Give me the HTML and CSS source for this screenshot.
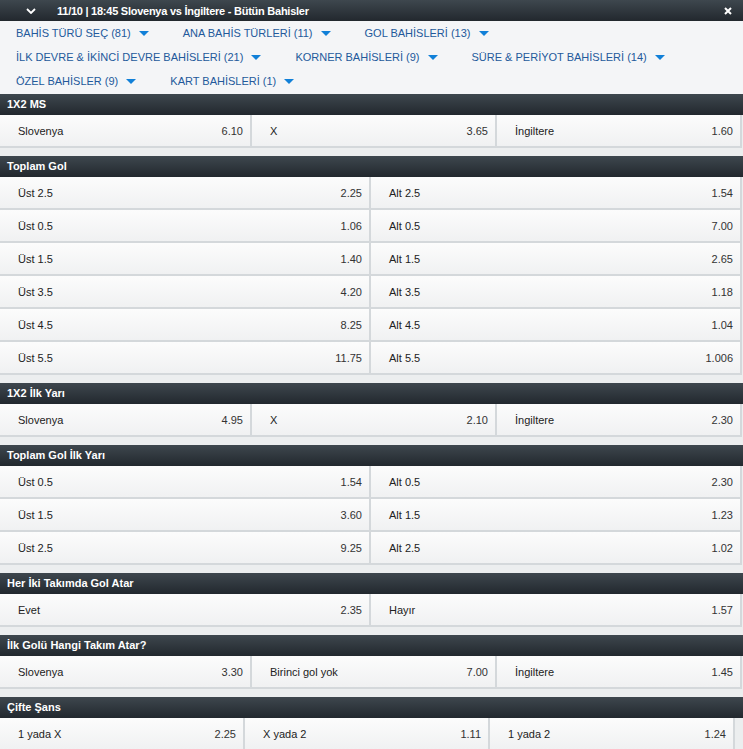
FILE: index.html
```html
<!DOCTYPE html>
<html lang="tr">
<head>
  <meta charset="UTF-8" />
  <meta name="viewport" content="width=device-width, initial-scale=1" />
  <title>Bütün Bahisler</title>
  <link rel="stylesheet" href="styles.css">
</head>
<body>

<div class="topbar">
  <svg class="chevron" viewBox="0 0 10 6" xmlns="http://www.w3.org/2000/svg"><polyline points="1,1 5,5 9,1" fill="none" stroke="#fff" stroke-width="1.8"/></svg>
  <span class="title">11/10 | 18:45 Slovenya vs İngiltere - Bütün Bahisler</span>
  <svg class="close" viewBox="0 0 8 8" xmlns="http://www.w3.org/2000/svg"><path d="M1 1L7 7M7 1L1 7" stroke="#fff" stroke-width="2"/></svg>
</div>

<div class="filters">
  <div class="frow">
    <span class="fitem">BAHİS TÜRÜ SEÇ (81)<i class="caret"></i></span>
    <span class="fitem">ANA BAHİS TÜRLERİ (11)<i class="caret"></i></span>
    <span class="fitem">GOL BAHİSLERİ (13)<i class="caret"></i></span>
  </div>
  <div class="frow">
    <span class="fitem">İLK DEVRE &amp; İKİNCİ DEVRE BAHİSLERİ (21)<i class="caret"></i></span>
    <span class="fitem">KORNER BAHİSLERİ (9)<i class="caret"></i></span>
    <span class="fitem">SÜRE &amp; PERİYOT BAHİSLERİ (14)<i class="caret"></i></span>
  </div>
  <div class="frow">
    <span class="fitem">ÖZEL BAHİSLER (9)<i class="caret"></i></span>
    <span class="fitem">KART BAHİSLERİ (1)<i class="caret"></i></span>
  </div>
</div>

<div class="market">
  <div class="mhead">1X2 MS</div>
  <div class="mrow three">
    <div class="cell"><span>Slovenya</span><span>6.10</span></div>
    <div class="cell"><span>X</span><span>3.65</span></div>
    <div class="cell"><span>İngiltere</span><span>1.60</span></div>
  </div>
</div>

<div class="market">
  <div class="mhead">Toplam Gol</div>
  <div class="mrow two">
    <div class="cell"><span>Üst 2.5</span><span>2.25</span></div>
    <div class="cell"><span>Alt 2.5</span><span>1.54</span></div>
  </div>
  <div class="mrow two">
    <div class="cell"><span>Üst 0.5</span><span>1.06</span></div>
    <div class="cell"><span>Alt 0.5</span><span>7.00</span></div>
  </div>
  <div class="mrow two">
    <div class="cell"><span>Üst 1.5</span><span>1.40</span></div>
    <div class="cell"><span>Alt 1.5</span><span>2.65</span></div>
  </div>
  <div class="mrow two">
    <div class="cell"><span>Üst 3.5</span><span>4.20</span></div>
    <div class="cell"><span>Alt 3.5</span><span>1.18</span></div>
  </div>
  <div class="mrow two">
    <div class="cell"><span>Üst 4.5</span><span>8.25</span></div>
    <div class="cell"><span>Alt 4.5</span><span>1.04</span></div>
  </div>
  <div class="mrow two">
    <div class="cell"><span>Üst 5.5</span><span>11.75</span></div>
    <div class="cell"><span>Alt 5.5</span><span>1.006</span></div>
  </div>
</div>

<div class="market">
  <div class="mhead">1X2 İlk Yarı</div>
  <div class="mrow three">
    <div class="cell"><span>Slovenya</span><span>4.95</span></div>
    <div class="cell"><span>X</span><span>2.10</span></div>
    <div class="cell"><span>İngiltere</span><span>2.30</span></div>
  </div>
</div>

<div class="market">
  <div class="mhead">Toplam Gol İlk Yarı</div>
  <div class="mrow two">
    <div class="cell"><span>Üst 0.5</span><span>1.54</span></div>
    <div class="cell"><span>Alt 0.5</span><span>2.30</span></div>
  </div>
  <div class="mrow two">
    <div class="cell"><span>Üst 1.5</span><span>3.60</span></div>
    <div class="cell"><span>Alt 1.5</span><span>1.23</span></div>
  </div>
  <div class="mrow two">
    <div class="cell"><span>Üst 2.5</span><span>9.25</span></div>
    <div class="cell"><span>Alt 2.5</span><span>1.02</span></div>
  </div>
</div>

<div class="market">
  <div class="mhead">Her İki Takımda Gol Atar</div>
  <div class="mrow two">
    <div class="cell"><span>Evet</span><span>2.35</span></div>
    <div class="cell"><span>Hayır</span><span>1.57</span></div>
  </div>
</div>

<div class="market">
  <div class="mhead">İlk Golü Hangi Takım Atar?</div>
  <div class="mrow three">
    <div class="cell"><span>Slovenya</span><span>3.30</span></div>
    <div class="cell"><span>Birinci gol yok</span><span>7.00</span></div>
    <div class="cell"><span>İngiltere</span><span>1.45</span></div>
  </div>
</div>

<div class="market">
  <div class="mhead">Çifte Şans</div>
  <div class="mrow even3">
    <div class="cell"><span>1 yada X</span><span>2.25</span></div>
    <div class="cell"><span>X yada 2</span><span>1.11</span></div>
    <div class="cell"><span>1 yada 2</span><span>1.24</span></div>
  </div>
</div>

</body>
</html>
```

FILE: styles.css
```css
body {
  margin: 0;
  background-color: #eceeef;
  font-family: "Liberation Sans", Arial, sans-serif;
  font-size: 11px;
  color: #222;
}
.topbar {
  height: 21px;
  display: flex;
  align-items: center;
  padding-left: 26px;
  padding-right: 11px;
  background: linear-gradient(#3e474e, #22282e);
  color: #fff;
}
.chevron {
  width: 10px;
  height: 6px;
  margin-right: 21px;
}
.title {
  font-weight: 700;
  letter-spacing: -0.25px;
  flex: 1;
}
.close {
  width: 8px;
  height: 8px;
}
.filters {
  background-color: #f4f5f7;
  padding-left: 16px;
  height: 73px;
}
.frow {
  height: 24px;
  display: flex;
  align-items: center;
}
.fitem {
  color: #23599b;
  display: inline-flex;
  align-items: center;
  margin-right: 34px;
  white-space: nowrap;
}
.caret {
  display: inline-block;
  width: 0;
  height: 0;
  margin-left: 8px;
  border-left: 5px solid transparent;
  border-right: 5px solid transparent;
  border-top: 5px solid #1180d8;
}
.market {
  margin-bottom: 8px;
}
.mhead {
  height: 21px;
  line-height: 21px;
  padding-left: 7px;
  background: linear-gradient(#3e474e, #22282e);
  color: #fff;
  font-weight: 700;
}
.mrow {
  display: grid;
}
.mrow.two { grid-template-columns: 371px 371px; }
.mrow.three { grid-template-columns: 252px 245px 245px; }
.mrow.even3 { grid-template-columns: 245px 245px 245px; }
.cell {
  height: 31px;
  display: flex;
  align-items: center;
  justify-content: space-between;
  padding: 0 7px 0 18px;
  background: linear-gradient(#fcfcfc, #f0f1f2);
  border-right: 2px solid #d4d8db;
  border-bottom: 2px solid #d4d8db;
  color: #222;
}
.cell span:last-child {
  color: #333;
}
```
